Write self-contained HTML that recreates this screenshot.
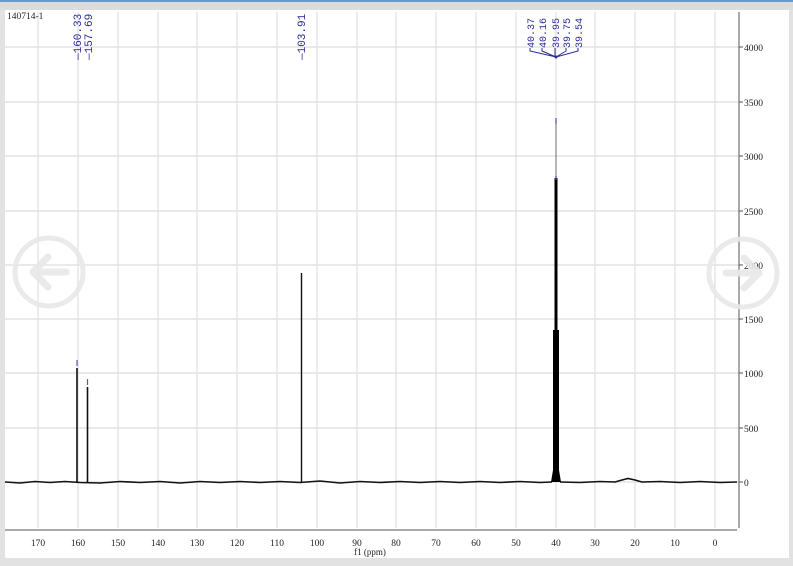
<!DOCTYPE html>
<html><head><meta charset="utf-8"><style>
html,body{margin:0;padding:0;width:793px;height:566px;overflow:hidden;background:#e4e4e4}
svg{display:block}
text{font-family:"Liberation Serif",serif}
.m{font-family:"Liberation Mono",monospace}
</style></head><body>
<svg width="793" height="566" viewBox="0 0 793 566" xmlns="http://www.w3.org/2000/svg">
<rect x="0" y="0" width="793" height="566" fill="#e2e2e2"/>
<rect x="0" y="0" width="793" height="2" fill="#6a9ac8"/>
<rect x="0" y="2" width="793" height="8" fill="#dcdcdc"/>
<rect x="5" y="10" width="784" height="548" fill="#fff"/>
<g stroke="#dedede" stroke-width="1.2">
<line x1="38" y1="12" x2="38" y2="528"/><line x1="118" y1="12" x2="118" y2="528"/><line x1="78" y1="12" x2="78" y2="528"/>
<line x1="158" y1="12" x2="158" y2="528"/><line x1="197" y1="12" x2="197" y2="528"/><line x1="237" y1="12" x2="237" y2="528"/>
<line x1="277" y1="12" x2="277" y2="528"/><line x1="317" y1="12" x2="317" y2="528"/><line x1="357" y1="12" x2="357" y2="528"/>
<line x1="396" y1="12" x2="396" y2="528"/><line x1="436" y1="12" x2="436" y2="528"/><line x1="476" y1="12" x2="476" y2="528"/>
<line x1="516" y1="12" x2="516" y2="528"/><line x1="556" y1="12" x2="556" y2="528"/><line x1="595" y1="12" x2="595" y2="528"/>
<line x1="635" y1="12" x2="635" y2="528"/><line x1="675" y1="12" x2="675" y2="528"/><line x1="715" y1="12" x2="715" y2="528"/>
<line x1="5" y1="47" x2="739" y2="47"/><line x1="5" y1="102" x2="739" y2="102"/><line x1="5" y1="156" x2="739" y2="156"/>
<line x1="5" y1="211" x2="739" y2="211"/><line x1="5" y1="265" x2="739" y2="265"/><line x1="5" y1="319" x2="739" y2="319"/>
<line x1="5" y1="373" x2="739" y2="373"/><line x1="5" y1="428" x2="739" y2="428"/><line x1="5" y1="482" x2="739" y2="482"/>
</g>
<line x1="739" y1="12" x2="739" y2="528" stroke="#555" stroke-width="1"/>
<g stroke="#555"><line x1="739" y1="47" x2="743" y2="47"/><line x1="739" y1="102" x2="743" y2="102"/><line x1="739" y1="156" x2="743" y2="156"/><line x1="739" y1="211" x2="743" y2="211"/><line x1="739" y1="265" x2="743" y2="265"/><line x1="739" y1="319" x2="743" y2="319"/><line x1="739" y1="373" x2="743" y2="373"/><line x1="739" y1="428" x2="743" y2="428"/><line x1="739" y1="482" x2="743" y2="482"/></g>
<g font-size="9.5" fill="#222">
<text x="744" y="51">4000</text><text x="744" y="106">3500</text><text x="744" y="160">3000</text><text x="744" y="215">2500</text><text x="744" y="269">2000</text><text x="744" y="323">1500</text><text x="744" y="377">1000</text><text x="744" y="432">500</text><text x="744" y="486">0</text>
</g>
<line x1="5" y1="530" x2="737" y2="530" stroke="#555"/>
<g font-size="9.5" fill="#222" text-anchor="middle">
<text x="38" y="546">170</text><text x="78" y="546">160</text><text x="118" y="546">150</text><text x="158" y="546">140</text><text x="197" y="546">130</text><text x="237" y="546">120</text><text x="277" y="546">110</text><text x="317" y="546">100</text><text x="357" y="546">90</text><text x="396" y="546">80</text><text x="436" y="546">70</text><text x="476" y="546">60</text><text x="516" y="546">50</text><text x="556" y="546">40</text><text x="595" y="546">30</text><text x="635" y="546">20</text><text x="675" y="546">10</text><text x="715" y="546">0</text>
<text x="370" y="555" font-size="9">f1 (ppm)</text>
</g>
<text x="7" y="19" font-size="9.5" fill="#222">140714-1</text>
<path d="M5 482 L20 483 L35 481.5 L50 482.5 L65 481.5 L80 482.5 L100 483 L120 481.5 L140 482.5 L160 481.5 L180 483 L200 481.5 L220 482.5 L240 481.5 L260 482.5 L280 481.5 L300 482.5 L320 481 L340 483 L360 481.5 L380 482.5 L400 481.5 L420 482.5 L440 481.5 L460 482.5 L480 481.5 L500 482.5 L520 481.5 L540 482.5 L552 482 M560 482 L580 482.5 L600 481.5 L615 482 L622 480 L628 478.5 L635 480 L642 482 L660 481.5 L680 482.5 L700 481.5 L720 482.5 L737 482" stroke="#111" stroke-width="1.6" fill="none"/>
<line x1="77" y1="368" x2="77" y2="482" stroke="#111" stroke-width="1.6"/>
<line x1="87.5" y1="387" x2="87.5" y2="482" stroke="#111" stroke-width="1.6"/>
<line x1="301.5" y1="273" x2="301.5" y2="482" stroke="#111" stroke-width="1.4"/>
<line x1="556" y1="120" x2="556" y2="178" stroke="#888" stroke-width="1.2"/>
<line x1="556" y1="178" x2="556" y2="330" stroke="#000" stroke-width="3"/>
<path d="M553 330 L559 330 L559 470 L561 482 L551 482 L553 470 Z" fill="#000"/>
<g stroke="#5555cc" stroke-width="1.2"><line x1="77" y1="360" x2="77" y2="366"/><line x1="87.5" y1="379" x2="87.5" y2="385"/><line x1="556" y1="118" x2="556" y2="124"/><line x1="556" y1="176" x2="556" y2="180"/></g>
<g class="m" font-size="11" fill="#2a2a9a">
<text class="m" transform="translate(81 60) rotate(-90)">—160.33</text>
<text class="m" transform="translate(92 60) rotate(-90)">—157.69</text>
<text class="m" transform="translate(305 60) rotate(-90)">—103.91</text>
</g>
<g font-size="10" fill="#2a2a9a">
<text class="m" transform="translate(534 48) rotate(-90)">40.37</text>
<text class="m" transform="translate(546 48) rotate(-90)">40.16</text>
<text class="m" transform="translate(559 48) rotate(-90)">39.95</text>
<text class="m" transform="translate(570 48) rotate(-90)">39.75</text>
<text class="m" transform="translate(582 48) rotate(-90)">39.54</text>
</g>
<path d="M530 48 L530 51 L556 57 M542 48 L542 51 L556 57 M555 48 L555 57 M566 48 L566 51 L556 57 M578 48 L578 51 L556 57" stroke="#2a2a9a" stroke-width="1" fill="none"/>
<circle cx="556" cy="57" r="1.5" fill="#2a2a9a"/>
<g stroke="#e8e8e8" fill="none" stroke-linecap="round" stroke-linejoin="round" opacity="0.9">
<circle cx="49" cy="272" r="34" stroke-width="5"/>
<path d="M66 272 L34 272 M48 257 L33 272 L48 287" stroke-width="7"/>
<circle cx="743" cy="273" r="34" stroke-width="5"/>
<path d="M726 273 L758 273 M744 258 L759 273 L744 288" stroke-width="7"/>
</g>
</svg>
</body></html>
